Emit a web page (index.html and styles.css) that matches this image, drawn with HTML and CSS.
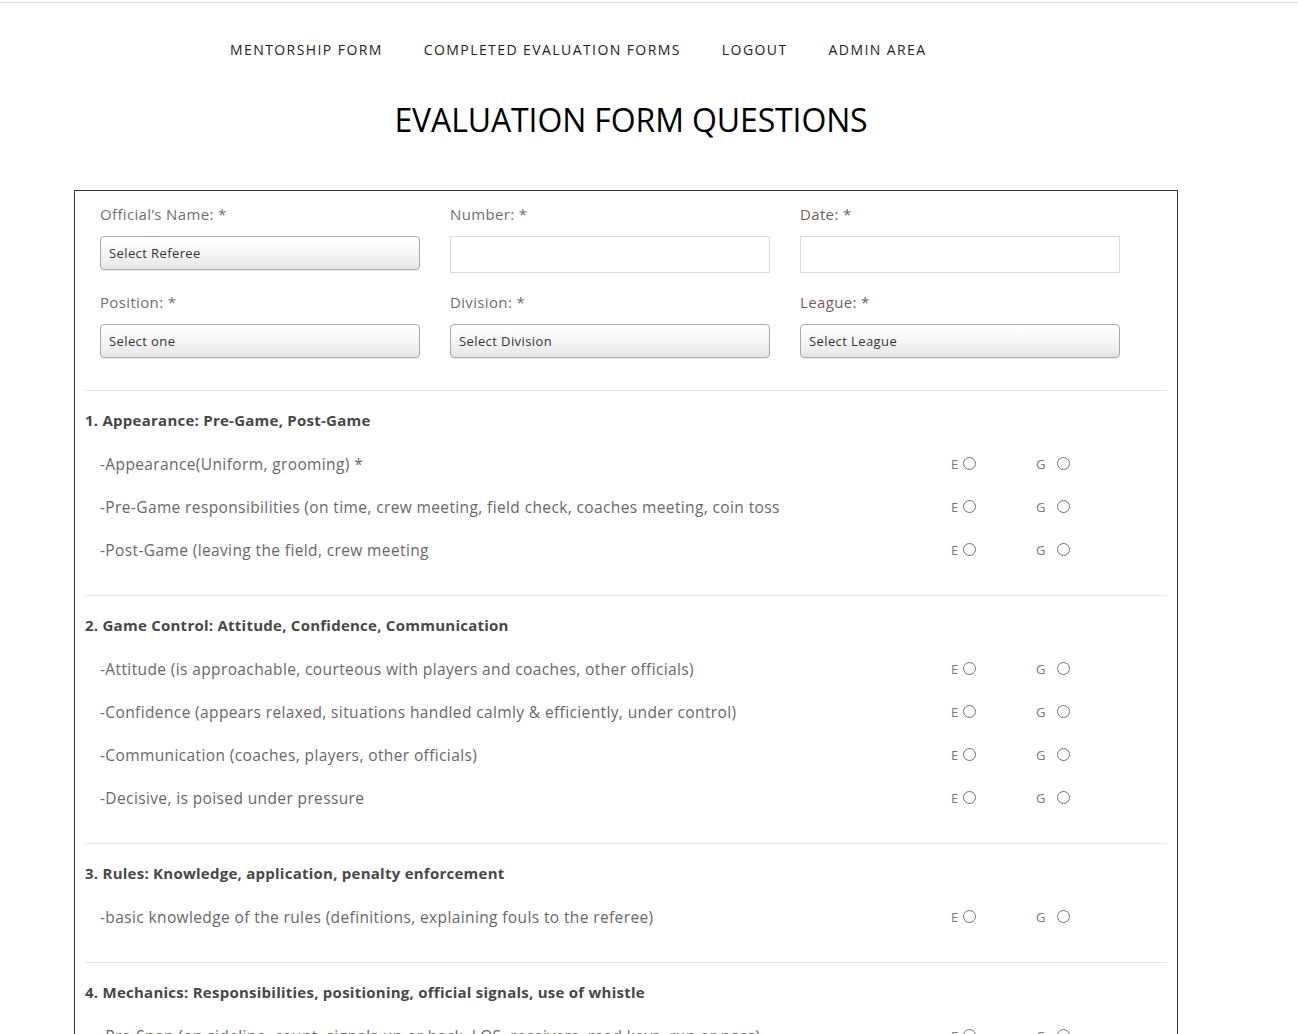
FILE: index.html
```html
<!DOCTYPE html>
<html lang="en">
<head>
<meta charset="utf-8">
<title>Evaluation Form Questions</title>
<link rel="stylesheet" href="styles.css">
</head>
<body>
<div class="topline"></div>
<div class="wrap">
  <nav class="nav">
    <a href="#">MENTORSHIP FORM</a>
    <a href="#">COMPLETED EVALUATION FORMS</a>
    <a href="#">LOGOUT</a>
    <a href="#">ADMIN AREA</a>
  </nav>
  <h1 class="title">EVALUATION FORM QUESTIONS</h1>

  <form class="box">
    <div class="fields">
      <div class="field">
        <label class="lbl">Official’s Name: *</label>
        <select class="sel"><option>Select Referee</option></select>
      </div>
      <div class="field">
        <label class="lbl">Number: *</label>
        <input class="inp" type="text">
      </div>
      <div class="field">
        <label class="lbl lbl-warm">Date: *</label>
        <input class="inp" type="text">
      </div>
      <div class="field">
        <label class="lbl">Position: *</label>
        <select class="sel"><option>Select one</option></select>
      </div>
      <div class="field">
        <label class="lbl">Division: *</label>
        <select class="sel"><option>Select Division</option></select>
      </div>
      <div class="field">
        <label class="lbl lbl-warm">League: *</label>
        <select class="sel"><option>Select League</option></select>
      </div>
    </div>

    <section class="sec">
      <h3 class="sec-h">1. Appearance: Pre-Game, Post-Game</h3>
      <div class="row"><span class="q">-Appearance(Uniform, grooming) *</span><span class="opt opt-e">E<input type="radio" name="a1"></span><span class="opt opt-g">G<input type="radio" name="a1"></span></div>
      <div class="row"><span class="q">-Pre-Game responsibilities (on time, crew meeting, field check, coaches meeting, coin toss</span><span class="opt opt-e">E<input type="radio" name="a2"></span><span class="opt opt-g">G<input type="radio" name="a2"></span></div>
      <div class="row"><span class="q">-Post-Game (leaving the field, crew meeting</span><span class="opt opt-e">E<input type="radio" name="a3"></span><span class="opt opt-g">G<input type="radio" name="a3"></span></div>
    </section>

    <section class="sec">
      <h3 class="sec-h">2. Game Control: Attitude, Confidence, Communication</h3>
      <div class="row"><span class="q">-Attitude (is approachable, courteous with players and coaches, other officials)</span><span class="opt opt-e">E<input type="radio" name="b1"></span><span class="opt opt-g">G<input type="radio" name="b1"></span></div>
      <div class="row"><span class="q">-Confidence (appears relaxed, situations handled calmly &amp; efficiently, under control)</span><span class="opt opt-e">E<input type="radio" name="b2"></span><span class="opt opt-g">G<input type="radio" name="b2"></span></div>
      <div class="row"><span class="q">-Communication (coaches, players, other officials)</span><span class="opt opt-e">E<input type="radio" name="b3"></span><span class="opt opt-g">G<input type="radio" name="b3"></span></div>
      <div class="row"><span class="q">-Decisive, is poised under pressure</span><span class="opt opt-e">E<input type="radio" name="b4"></span><span class="opt opt-g">G<input type="radio" name="b4"></span></div>
    </section>

    <section class="sec">
      <h3 class="sec-h">3. Rules: Knowledge, application, penalty enforcement</h3>
      <div class="row"><span class="q">-basic knowledge of the rules (definitions, explaining fouls to the referee)</span><span class="opt opt-e">E<input type="radio" name="c1"></span><span class="opt opt-g">G<input type="radio" name="c1"></span></div>
    </section>

    <section class="sec">
      <h3 class="sec-h">4. Mechanics: Responsibilities, positioning, official signals, use of whistle</h3>
      <div class="row"><span class="q">-Pre-Snap (on sideline, count, signals up or back, LOS, receivers, read keys, run or pass)</span><span class="opt opt-e">E<input type="radio" name="d1"></span><span class="opt opt-g">G<input type="radio" name="d1"></span></div>
      <div class="row"><span class="q">-Post-Snap (coverage, dead ball officiating, spot of ball)</span><span class="opt opt-e">E<input type="radio" name="d2"></span><span class="opt opt-g">G<input type="radio" name="d2"></span></div>
    </section>
  </form>
</div>
</body>
</html>
```

FILE: styles.css
```css
* { box-sizing: border-box; }

html, body {
  margin: 0;
  padding: 0;
  background: #fff;
}

body {
  font-family: "Open Sans", "DejaVu Sans", sans-serif;
  color: #666;
}

.topline {
  height: 3px;
  border-bottom: 1px solid #dedede;
}

.wrap {
  margin-left: 74px;
  width: 1104px;
}

.nav {
  display: flex;
  gap: 41px;
  margin-left: 156px;
  padding-top: 37px;
  line-height: 20px;
}

.nav a {
  color: #222;
  text-decoration: none;
  font-size: 14px;
  letter-spacing: 1.42px;
}

.title {
  margin: 40px 0 0;
  padding-left: 10px;
  text-align: center;
  font-family: "Open Sans", sans-serif;
  font-weight: 400;
  font-size: 32px;
  line-height: 40px;
  letter-spacing: -0.12px;
  color: #000;
}

.box {
  margin-top: 50px;
  border: 1px solid #333;
  padding: 12px 10px 0;
}

.fields {
  display: grid;
  grid-template-columns: 320px 320px 320px;
  column-gap: 30px;
  row-gap: 18px;
  padding-left: 15px;
  align-items: start;
  padding-bottom: 32px;
  border-bottom: 1px solid #e4e4e4;
}

.field {
  display: flex;
  flex-direction: column;
}

.lbl {
  font-size: 15px;
  line-height: 22px;
  letter-spacing: 0.35px;
  color: #6f6f72;
  margin-bottom: 11px;
}

.lbl-warm { color: #735f5f; }

.sel {
  appearance: none;
  -webkit-appearance: none;
  height: 34px;
  width: 100%;
  border: 1px solid #a9a9a9;
  border-radius: 4px;
  padding: 0 8px;
  font-family: "Open Sans", sans-serif;
  font-size: 13px;
  letter-spacing: 0.4px;
  color: #333;
  background: linear-gradient(#ffffff 0%, #f7f7f7 45%, #ebebeb 85%, #e2e2e2 100%);
  box-shadow: 0 1px 1px rgba(0,0,0,0.08);
}

.inp {
  height: 37px;
  width: 100%;
  border: 1px solid #dcdcdc;
  background: #fff;
  padding: 0 8px;
}

.sec {
  padding: 8px 0 24px;
  border-bottom: 1px solid #e4e4e4;
}

.sec-h {
  margin: 0;
  font-size: 15px;
  font-weight: 700;
  line-height: 43px;
  letter-spacing: 0.25px;
  color: #474747;
}

.row {
  display: grid;
  grid-template-columns: 1fr 85px 131px;
  align-items: center;
  height: 43px;
  padding-left: 15px;
  font-size: 15.5px;
  letter-spacing: 0.38px;
  color: #686868;
}

.q { white-space: nowrap; overflow: hidden; }

.opt {
  display: flex;
  align-items: center;
  font-size: 13px;
  letter-spacing: 0;
  color: #777;
}

.opt-e input { margin: 0 0 0 5px; }
.opt-g input { margin: 0 0 0 12px; }

.opt input {
  appearance: none;
  -webkit-appearance: none;
  width: 13px;
  height: 13px;
  border: 1px solid #707070;
  border-radius: 50%;
  background: #fff;
}
```
